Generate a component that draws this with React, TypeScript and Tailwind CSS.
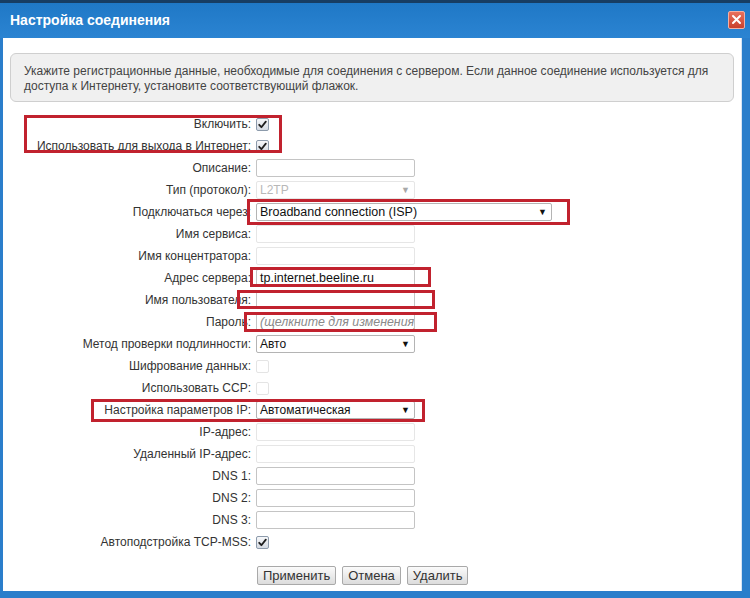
import React from 'react'

const FONT = '"Liberation Sans", Arial, sans-serif'

function Check({ checked = false, disabled = false }: { checked?: boolean; disabled?: boolean }) {
  if (disabled) {
    return <span className="block w-[13px] h-[13px] border border-[#e4e4e4] rounded-[2px] bg-white" />
  }
  return (
    <span className="flex items-center justify-center w-[13px] h-[13px] border border-[#8c9aab] rounded-[2px] bg-gradient-to-b from-[#f7f8fa] to-[#d5dbe3]">
      {checked && (
        <svg width="9" height="9" viewBox="0 0 9 9">
          <path d="M1.2 4.8 L3.4 7.2 L7.8 1.6" fill="none" stroke="#1e1e1e" strokeWidth="1.8" strokeLinecap="round" strokeLinejoin="round" />
        </svg>
      )}
    </span>
  )
}

function TextBox({ value, placeholder, disabled = false }: { value?: string; placeholder?: string; disabled?: boolean }) {
  return (
    <div
      className={
        'w-[159px] h-[18px] rounded-[2px] border bg-white px-[3px] flex items-center text-[12px] overflow-hidden whitespace-nowrap ' +
        (disabled ? 'border-[#e6e6e6]' : 'border-[#c4c4c4]')
      }
    >
      {value && <span className="text-[12.5px] text-[#111]">{value}</span>}
      {placeholder && <span className="italic text-[12.4px] text-[#8a8a8a]">{placeholder}</span>}
    </div>
  )
}

function Select({ value, wide = false, disabled = false }: { value: string; wide?: boolean; disabled?: boolean }) {
  return (
    <div
      className={
        'h-[18px] rounded-[2px] border bg-white pl-[3px] pr-[4px] flex items-center justify-between text-[12px] ' +
        (wide ? 'w-[296px] ' : 'w-[159px] ') +
        (disabled ? 'border-[#e6e6e6] text-[#b8b8b8]' : 'border-[#b4b4b4] text-[#111]')
      }
    >
      <span className={wide ? 'text-[12.5px]' : ''}>{value}</span>
      <span className={'text-[9px] leading-none ' + (disabled ? 'text-[#a8a8a8]' : 'text-[#111]')}>▼</span>
    </div>
  )
}

type Row = { label: string; control: React.ReactNode }

const ROWS: Row[] = [
  { label: 'Включить:', control: <Check checked /> },
  { label: 'Использовать для выхода в Интернет:', control: <Check checked /> },
  { label: 'Описание:', control: <TextBox /> },
  { label: 'Тип (протокол):', control: <Select value="L2TP" disabled /> },
  { label: 'Подключаться через:', control: <Select value="Broadband connection (ISP)" wide /> },
  { label: 'Имя сервиса:', control: <TextBox disabled /> },
  { label: 'Имя концентратора:', control: <TextBox disabled /> },
  { label: 'Адрес сервера:', control: <TextBox value="tp.internet.beeline.ru" /> },
  { label: 'Имя пользователя:', control: <TextBox /> },
  { label: 'Пароль:', control: <TextBox placeholder="(щелкните для изменения)" /> },
  { label: 'Метод проверки подлинности:', control: <Select value="Авто" /> },
  { label: 'Шифрование данных:', control: <Check disabled /> },
  { label: 'Использовать CCP:', control: <Check disabled /> },
  { label: 'Настройка параметров IP:', control: <Select value="Автоматическая" /> },
  { label: 'IP-адрес:', control: <TextBox disabled /> },
  { label: 'Удаленный IP-адрес:', control: <TextBox disabled /> },
  { label: 'DNS 1:', control: <TextBox /> },
  { label: 'DNS 2:', control: <TextBox /> },
  { label: 'DNS 3:', control: <TextBox /> },
  { label: 'Автоподстройка TCP-MSS:', control: <Check checked /> },
]

function Btn({ children }: { children: React.ReactNode }) {
  return (
    <button className="h-[19px] px-[5px] border border-[#a9a9a9] rounded-[2px] bg-gradient-to-b from-[#fbfbfb] to-[#dcdcdc] text-[13px] leading-none text-[#333]">
      {children}
    </button>
  )
}

// red annotation frames drawn over the form
const MARKS = [
  'left-[21px] top-[77px] w-[258px] h-[38px]',
  'left-[244px] top-[161px] w-[323px] h-[26px]',
  'left-[247px] top-[229px] w-[181px] h-[20px]',
  'left-[234px] top-[252px] w-[198px] h-[19px]',
  'left-[241px] top-[274px] w-[193px] h-[20px]',
  'left-[88px] top-[361px] w-[334px] h-[23px]',
]

export default function App() {
  return (
    <div className="w-[750px] h-[598px] flex flex-col bg-[#2a7ecb] overflow-hidden" style={{ fontFamily: FONT }}>
      <div className="h-[3px] bg-[#173d63]" />

      {/* Title bar */}
      <div className="h-[35px] flex items-center justify-between pl-[10px] pr-[5px] bg-gradient-to-b from-[#1f78c6] to-[#2b84d2]">
        <span className="text-white text-[14px] font-bold">Настройка соединения</span>
        <div className="w-[17px] h-[18px] mb-[2px] flex items-center justify-center rounded-[2px] border border-[#f2b0a4] bg-gradient-to-b from-[#e8705c] to-[#c9402c]">
          <svg width="11" height="11" viewBox="0 0 11 11">
            <path d="M2 2 L9 9 M9 2 L2 9" stroke="#fff" strokeWidth="2" strokeLinecap="round" />
          </svg>
        </div>
      </div>

      {/* Body */}
      <div className="relative flex-1 ml-[3px] mr-[8px] mb-[7px] bg-white text-[12px] text-[#333] border-r border-[#d6e6f5]">
        <div className="mx-[7px] mt-[15px] h-[49px] rounded-[6px] border border-[#cfcfcf] bg-[#f0f0f0] pl-[13px] pr-[8px] pt-[10px] leading-[15px] text-[#444]">
          Укажите регистрационные данные, необходимые для соединения с сервером. Если данное соединение используется для
          доступа к Интернету, установите соответствующий флажок.
        </div>

        <div className="mt-[11px] flex flex-col">
          {ROWS.map((r) => (
            <div key={r.label} className="h-[22px] flex items-center">
              <span className="w-[249px] text-right pr-[1px]">{r.label}</span>
              <div className="pl-[4px]">{r.control}</div>
            </div>
          ))}
        </div>

        <div className="mt-[13px] pl-[254px] flex gap-[6px]">
          <Btn>Применить</Btn>
          <Btn>Отмена</Btn>
          <Btn>Удалить</Btn>
        </div>

        {MARKS.map((m) => (
          <div key={m} className={'absolute border-[3px] border-[#c1222e] pointer-events-none ' + m} />
        ))}
      </div>
    </div>
  )
}
